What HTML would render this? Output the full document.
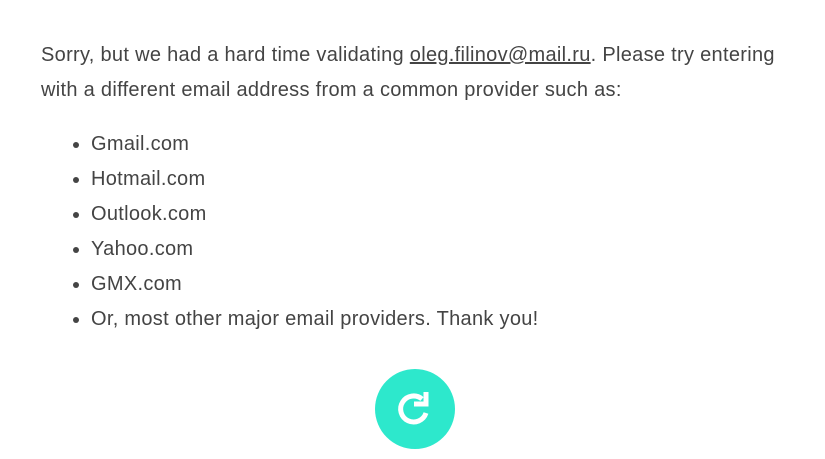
<!DOCTYPE html>
<html><head><style>
html,body{margin:0;padding:0;background:#fff;width:825px;height:459px;overflow:hidden}
body{font-family:"Liberation Sans",sans-serif;color:#444;font-size:20px;letter-spacing:0.3px}
p{position:absolute;left:41px;top:38px;margin:0;line-height:35px;width:745px}
ul{position:absolute;left:41px;top:127px;margin:0;padding:0 0 0 50px;line-height:35px}
a{color:#444;text-decoration:underline}
.c{position:absolute;left:375px;top:369px;width:80px;height:80px;border-radius:50%;background:#2de8cc}
</style></head><body>
<p>Sorry, but we had a hard time validating <a>oleg.filinov@mail.ru</a>. Please try entering with a different email address from a common provider such as:</p>
<ul>
<li>Gmail.com</li>
<li>Hotmail.com</li>
<li>Outlook.com</li>
<li>Yahoo.com</li>
<li>GMX.com</li>
<li>Or, most other major email providers. Thank you!</li>
</ul>
<div class="c"><svg width="80" height="80" viewBox="0 0 80 80">
<path d="M51 44 A13 13 0 1 1 47 30" fill="none" stroke="#fff" stroke-width="5"/>
<path d="M39 35 L51 35 L51 23" fill="none" stroke="#fff" stroke-width="5"/>
</svg></div>
</body></html>
